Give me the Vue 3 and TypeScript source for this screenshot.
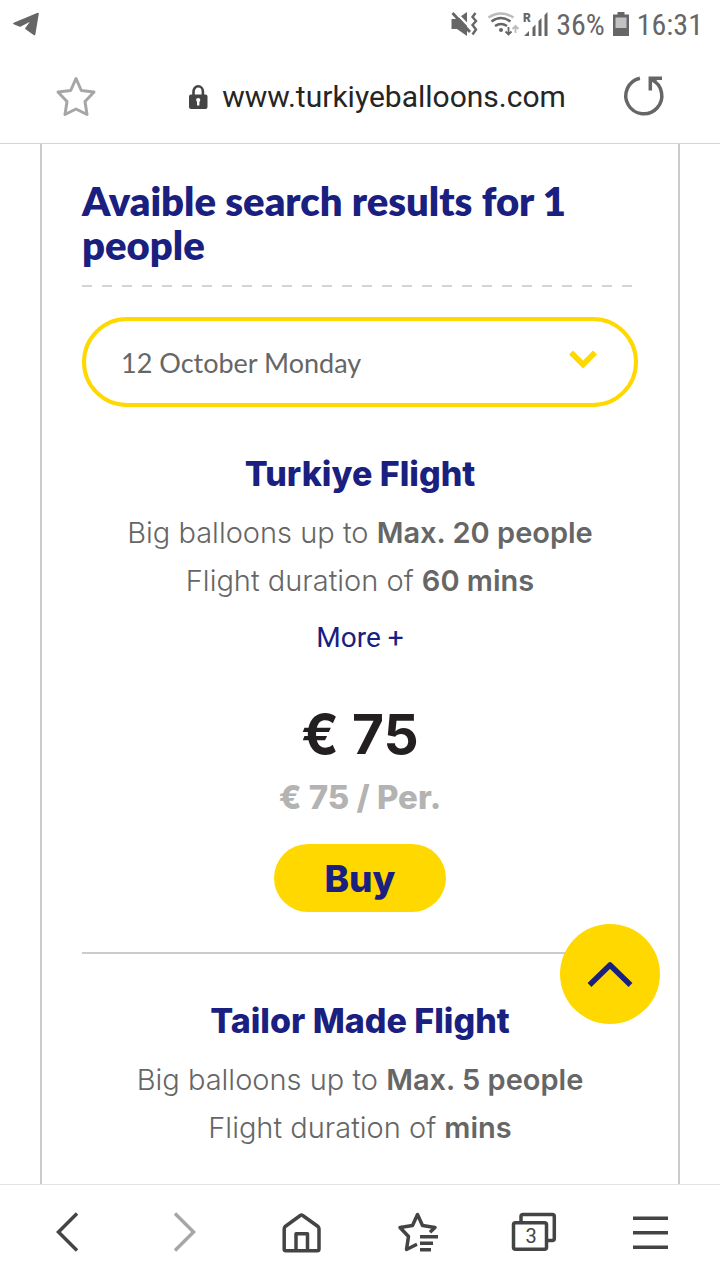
<script setup lang="ts">
import { ref } from 'vue'

interface Flight {
  name: string
  capacity: string
  duration: string
  price?: string
}

const selectedDate = ref('12 October Monday')
const dates: string[] = ['12 October Monday']
const flights: Flight[] = [
  { name: 'Turkiye Flight', capacity: 'Max. 20 people', duration: '60 mins', price: '€ 75' },
  { name: 'Tailor Made Flight', capacity: 'Max. 5 people', duration: 'mins' },
]
const content = ref<HTMLElement | null>(null)

function scrollToTop(): void {
  content.value?.scrollTo({ top: 0, behavior: 'smooth' })
}
</script>

<template>
  <div class="screen">
    <header>
      <div class="status">
        <svg class="telegram" width="28" height="28" viewBox="0 0 28 28" aria-hidden="true">
          <path d="M2 13.500 26 3.500 22.500 24.500 14 18.500 20.500 9.500 8 16Z" fill="#666" stroke="#666" stroke-width="1.600" stroke-linejoin="round" />
        </svg>
        <div class="status-right">
          <svg width="98" height="28" viewBox="0 0 98 28" aria-hidden="true">
            <g fill="#666">
              <path d="M1.500 9H7L17 2V26L7 19H1.500Z" />
              <path d="M4 0.500 22 19.500" stroke="#fff" stroke-width="2.500" />
              <path d="M2.500 3 20 22" stroke="#666" stroke-width="2.800" />
              <path d="M25.500 3 22.500 7 26 11 22.500 15 26 19.500 22.500 24.500" fill="none" stroke="#666" stroke-width="2.400" />
              <path d="M38.500 7.500Q51 -0.500 63.500 7.500" fill="none" stroke="#bbb" stroke-width="2.500" />
              <path d="M41.500 11.500Q51 4.500 60.500 11.500M45 16Q51 12 57 16" fill="none" stroke="#666" stroke-width="2.500" />
              <circle cx="51" cy="20" r="2" />
              <path d="M58.500 17V24M55.500 21.500 58.500 24.500 61.500 21.500" fill="none" stroke="#666" stroke-width="1.800" />
              <path d="M65.500 23V16M62.500 19 65.500 16 68.500 19" fill="none" stroke="#bbb" stroke-width="1.800" />
              <path d="M74 26 79 21V26ZM82.500 17.500 85.500 14.500V26H82.500ZM88.500 11 91.500 8V26H88.500ZM94.500 5 97.500 2V26H94.500Z" />
            </g>
            <text x="73" y="12" font-size="12" font-weight="900" fill="#666">R</text>
          </svg>
          <span>36%</span>
          <svg width="16" height="26" viewBox="0 0 16 26" aria-hidden="true">
            <path d="M4.500 1H11.500V3.500H16V25H0V3.500H4.500Z" fill="#666" />
            <path d="M2.500 6.500H13.500V17H2.500Z" fill="#c2c2c2" />
          </svg>
          <span>16:31</span>
        </div>
      </div>
      <div class="address">
        <button type="button" aria-label="Add bookmark">
          <svg width="48" height="48" viewBox="0 0 48 48">
            <path d="M24 5.500 29.300 17.500 42 19 33 28.500 35 41.500 24 36 13 41.500 15 28.500 6 19 18.700 17.500Z" fill="none" stroke="#a6a6a6" stroke-width="3" stroke-linejoin="round" />
          </svg>
        </button>
        <div class="url">
          <svg width="20" height="28" viewBox="0 0 20 28" aria-hidden="true">
            <path d="M5.500 13V8.500a4.700 5.200 0 0 1 9.400 0V13" fill="none" stroke="#444" stroke-width="2.600" />
            <rect x="1" y="11.500" width="18.500" height="14.500" rx="2" fill="#444" />
            <circle cx="10.200" cy="17" r="2.100" fill="#fff" />
            <path d="M9 17h2.400v5.500H9Z" fill="#fff" />
          </svg>
          <span>www.turkiyeballoons.com</span>
        </div>
        <button type="button" aria-label="Reload">
          <svg width="48" height="48" viewBox="0 0 48 48" fill="none" stroke="#666" stroke-width="3.500">
            <path d="M19.900 5.200A18 18 0 1 0 31.500 6.500" />
            <path d="M42 5.300H30.300V17.500" />
            <path d="M31 6 36 9" />
          </svg>
        </button>
      </div>
    </header>

    <div class="viewport">
      <main ref="content">
        <div class="card">
          <h1>Avaible search results for 1 people</h1>
          <div class="dashes"></div>
          <div class="picker">
            <select v-model="selectedDate" aria-label="Flight date">
              <option v-for="date in dates" :key="date">{{ date }}</option>
            </select>
            <svg class="chevron" width="28" height="20" viewBox="0 0 28 20" aria-hidden="true">
              <path d="M2 2.500 14 14.500 26 2.500" fill="none" stroke="#ffd800" stroke-width="5.500" />
            </svg>
          </div>
          <article v-for="flight in flights" :key="flight.name">
            <h2>{{ flight.name }}</h2>
            <p>Big balloons up to <strong>{{ flight.capacity }}</strong></p>
            <p>Flight duration of <strong>{{ flight.duration }}</strong></p>
            <template v-if="flight.price">
              <a class="more" href="#">More +</a>
              <div class="price">{{ flight.price }}</div>
              <div class="per">{{ flight.price }} / Per.</div>
              <button class="buy" type="button">Buy</button>
            </template>
          </article>
        </div>
      </main>
      <button class="to-top" type="button" aria-label="Back to top" @click="scrollToTop">
        <svg width="48" height="32" viewBox="0 0 48 32">
          <path d="M3.500 27 24 7 44.500 27" fill="none" stroke="#1a2080" stroke-width="5.500" stroke-linejoin="round" />
        </svg>
      </button>
    </div>

    <nav aria-label="Browser">
      <button type="button" aria-label="Back">
        <svg width="48" height="48" viewBox="0 0 48 48"><path d="M33 4.500 14.500 23 33 41.500" /></svg>
      </button>
      <button type="button" aria-label="Forward" disabled>
        <svg width="48" height="48" viewBox="0 0 48 48"><path d="M14 4.500 32.500 23 14 41.500" /></svg>
      </button>
      <button type="button" aria-label="Home">
        <svg width="48" height="48" viewBox="0 0 48 48">
          <path d="M22.300 6.500Q23.500 5.500 24.700 6.500L40 17.500Q41 18.500 41 20V40Q41 41.800 39.200 41.800H8Q6.200 41.800 6.200 40V20Q6.200 18.500 7.200 17.500ZM18 42V24.800H29.500V42" stroke-linejoin="round" />
        </svg>
      </button>
      <button type="button" aria-label="Bookmarks">
        <svg width="48" height="48" viewBox="0 0 48 48" stroke-linejoin="round">
          <path d="M36 23.200 41 18.500 28.500 16.500 23.500 5.500 18.500 16.500 6 18.500 14.500 27.500 12.500 40.500 23 35.300M26 27.800H44M26 34.300H39M26 40.800H37" />
        </svg>
      </button>
      <button type="button" aria-label="Tabs, 3 open">
        <svg width="48" height="48" viewBox="0 0 48 48">
          <path d="M10 13V7.500q0-2 2-2H41.300q2 0 2 2V29.500q0 2-2 2H36" />
          <rect x="2.500" y="13.700" width="33" height="26.500" rx="2" />
          <text x="20" y="34" font-size="20" text-anchor="middle">3</text>
        </svg>
      </button>
      <button type="button" aria-label="Menu">
        <svg width="48" height="48" viewBox="0 0 48 48"><path d="M5 9.200H40M5 23.700H40M5 38.200H40" /></svg>
      </button>
    </nav>
  </div>
</template>

<style>
body {
  background: #fff;
}
</style>

<style scoped>
.screen {
  display: flex;
  flex-direction: column;
  height: 100vh;
  font-family: Roboto, "Liberation Sans", sans-serif;
  color: #666;
}
.screen * {
  box-sizing: border-box;
}
button {
  display: flex;
  align-items: center;
  justify-content: center;
  padding: 0;
  border: 0;
  background: none;
  font-family: inherit;
}
svg {
  display: block;
  flex: none;
}
header {
  border-bottom: 1px solid #d4d4d4;
}
.status {
  display: flex;
  align-items: center;
  justify-content: space-between;
  height: 50px;
  padding: 0 17px 2px 12px;
}
.status-right {
  display: flex;
  align-items: center;
  gap: 8px;
  font-family: "Roboto Condensed", "Liberation Sans Narrow", Roboto, sans-serif;
  font-size: 30px;
}
.status-right text {
  font-family: Roboto, sans-serif;
}
.address {
  display: flex;
  align-items: center;
  height: 93px;
  padding: 0 52px;
}
.url {
  display: flex;
  flex: 1;
  align-items: center;
  justify-content: center;
  gap: 14px;
  padding-left: 34px;
  font-size: 30px;
  color: #252525;
}
.viewport {
  position: relative;
  flex: 1;
  min-height: 0;
}
main {
  height: 100%;
  padding: 0 40px;
  overflow-y: auto;
}
.card {
  min-height: 100%;
  padding: 35px 40px 0;
  border: solid #ccc;
  border-width: 0 2px;
}
h1 {
  margin: 0;
  font-family: Lato, sans-serif;
  font-size: 40px;
  font-weight: 800;
  line-height: 44px;
  color: #1a2080;
}
.dashes {
  height: 2px;
  margin: 18px 0 30px;
  background: repeating-linear-gradient(90deg, #d4d4d4 0 10px, transparent 10px 20px);
}
.picker {
  position: relative;
}
select {
  display: block;
  width: 100%;
  height: 90px;
  padding: 0 80px 0 35px;
  border: 4px solid #ffd800;
  border-radius: 45px;
  background: #fff;
  appearance: none;
  font-family: Lato, sans-serif;
  font-size: 27px;
  color: #666;
}
.chevron {
  position: absolute;
  top: 33px;
  right: 41px;
  pointer-events: none;
}
article {
  display: flex;
  flex-direction: column;
  align-items: center;
  padding: 47px 0 40px;
  font-family: Inter, sans-serif;
  text-align: center;
}
article + article {
  padding-bottom: 0;
  border-top: 2px solid #ccc;
}
h2 {
  margin: 0 0 15px;
  font-size: 34px;
  font-weight: 800;
  line-height: 40px;
  color: #1a2080;
}
p {
  margin: 0;
  font-size: 29px;
  font-weight: 300;
  line-height: 48px;
}
strong {
  font-weight: 600;
}
.more {
  margin-top: 17px;
  font-family: Roboto, sans-serif;
  font-size: 28px;
  line-height: 32px;
  color: #1a2080;
  text-decoration: none;
}
.price {
  margin-top: 50px;
  font-size: 55px;
  font-weight: 700;
  line-height: 60px;
  color: #231f20;
}
.per {
  margin-top: 17px;
  font-size: 33px;
  font-weight: 800;
  line-height: 32px;
  color: #b3b3b3;
}
.buy {
  min-width: 172px;
  height: 68px;
  margin-top: 31px;
  padding: 0 40px;
  border-radius: 34px;
  background: #ffd800;
  font-size: 37px;
  font-weight: 800;
  color: #1a2080;
}
.to-top {
  position: absolute;
  right: 60px;
  bottom: 160px;
  width: 100px;
  height: 100px;
  border-radius: 50%;
  background: #ffd800;
}
nav {
  display: flex;
  height: 96px;
  padding: 0 10px;
  border-top: 1px solid #e2e2e2;
}
nav button {
  flex: 1;
}
nav svg {
  fill: none;
  stroke: #444;
  stroke-width: 3.5px;
}
nav text {
  fill: #444;
  stroke: none;
}
nav button:disabled svg {
  stroke: #a6a6a6;
}
</style>
